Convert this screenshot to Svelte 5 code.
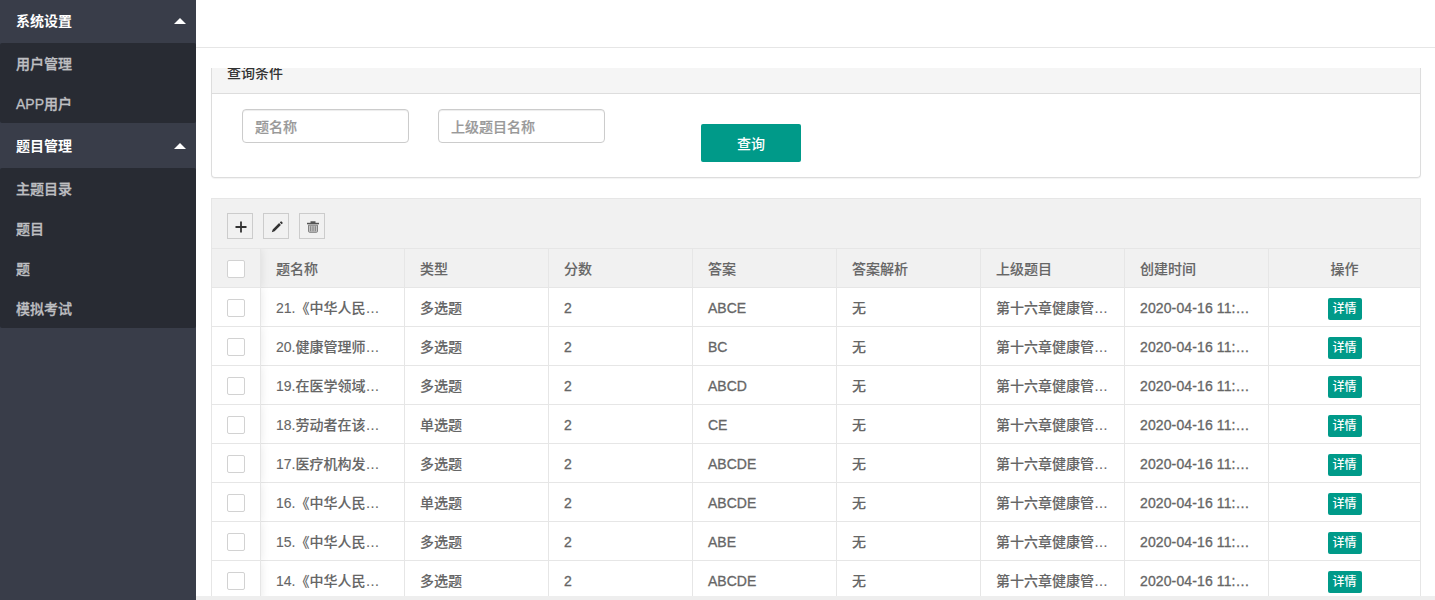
<script>
  const menus = [
    { title: "系统设置", items: ["用户管理", "APP用户"] },
    { title: "题目管理", items: ["主题目录", "题目", "题", "模拟考试"] },
  ];

  const columns = ["题名称", "类型", "分数", "答案", "答案解析", "上级题目", "创建时间"];

  const rows = [
    { name: "21.《中华人民…", type: "多选题", score: 2, answer: "ABCE" },
    { name: "20.健康管理师…", type: "多选题", score: 2, answer: "BC" },
    { name: "19.在医学领域…", type: "多选题", score: 2, answer: "ABCD" },
    { name: "18.劳动者在该…", type: "单选题", score: 2, answer: "CE" },
    { name: "17.医疗机构发…", type: "多选题", score: 2, answer: "ABCDE" },
    { name: "16.《中华人民…", type: "单选题", score: 2, answer: "ABCDE" },
    { name: "15.《中华人民…", type: "多选题", score: 2, answer: "ABE" },
    { name: "14.《中华人民…", type: "多选题", score: 2, answer: "ABCDE" },
  ];
  const analysis = "无";
  const parent = "第十六章健康管…";
  const created = "2020-04-16 11:…";
</script>

<div class="layout">
  <nav class="side">
    {#each menus as menu}
      <div class="menu-title">
        <span>{menu.title}</span>
        <i class="arrow"></i>
      </div>
      <ul class="menu-child">
        {#each menu.items as item}
          <li>{item}</li>
        {/each}
      </ul>
    {/each}
  </nav>

  <div class="main">
    <header class="top"></header>
    <div class="body">
      <div class="panel">
        <div class="panel-heading">查询条件</div>
        <div class="panel-body">
          <input type="text" placeholder="题名称" />
          <input type="text" placeholder="上级题目名称" />
          <button class="search">查询</button>
        </div>
      </div>

      <div class="table-view">
        <div class="tools">
          <button class="tool" aria-label="add">
            <svg width="16" height="16" viewBox="0 0 16 16">
              <path d="M8 2.5v11M2.5 8h11" stroke="#333" stroke-width="1.8" fill="none" />
            </svg>
          </button>
          <button class="tool" aria-label="edit">
            <svg width="16" height="16" viewBox="0 0 16 16">
              <path d="M2.8 13.3l.9-2.9 6.4-6.3 1.8 1.8-6.3 6.4zM10.8 3.5l.9-.9q.5-.4 1 0l.8.8q.4.5 0 1l-.9.9z" fill="#333" />
            </svg>
          </button>
          <button class="tool" aria-label="delete">
            <svg width="16" height="16" viewBox="0 0 16 16">
              <path d="M5.5 2.4h5v1.4h-5z" fill="#333" />
              <path d="M2 3.8h12v1.5H2z" fill="#555" />
              <path d="M3.5 6.2h9v6.1q0 1-1 1h-7q-1 0-1-1z" fill="#c4c4c4" stroke="#777" stroke-width=".9" />
              <path d="M5.7 7.2v5M8 7.2v5M10.3 7.2v5" stroke="#777" stroke-width=".9" />
            </svg>
          </button>
        </div>

        <div class="row head">
          <div class="cell check"><i class="box"></i></div>
          {#each columns as column}
            <div class="cell">{column}</div>
          {/each}
          <div class="cell action">操作</div>
        </div>
        {#each rows as row}
          <div class="row">
            <div class="cell check"><i class="box"></i></div>
            <div class="cell">{row.name}</div>
            <div class="cell">{row.type}</div>
            <div class="cell latin">{row.score}</div>
            <div class="cell latin">{row.answer}</div>
            <div class="cell">{analysis}</div>
            <div class="cell">{parent}</div>
            <div class="cell latin date">{created}</div>
            <div class="cell action"><button class="detail">详情</button></div>
          </div>
        {/each}
      </div>
    </div>
    <footer></footer>
  </div>
</div>

<style>
  :global(body) {
    overflow: hidden;
  }
  .layout {
    display: flex;
    height: 600px;
    overflow: hidden;
    font-family: "Liberation Sans", "Noto Sans CJK SC", sans-serif;
    font-size: 14px;
    font-weight: 500;
    background: #fff;
  }
  .layout * {
    box-sizing: border-box;
  }
  button,
  input {
    font: inherit;
    padding: 0;
    margin: 0;
  }
  .side {
    flex: none;
    width: 196px;
    background: #393d49;
  }
  .menu-title {
    display: flex;
    align-items: center;
    justify-content: space-between;
    height: 45px;
    padding: 0 10px 0 16px;
    color: #fff;
    font-weight: 700;
  }
  .menu-title span {
    padding-bottom: 2px;
  }
  .menu-title:first-child {
    height: 43px;
    padding-bottom: 2px;
  }
  .arrow {
    border: 6px solid transparent;
    border-top: 0;
    border-bottom-color: #fff;
  }
  .menu-child {
    list-style: none;
    margin: 0;
    padding: 0;
    background: #282b33;
    border-radius: 2px;
  }
  .menu-child li {
    height: 40px;
    line-height: 42px;
    padding-left: 16px;
    color: #bebfc2;
    -webkit-text-stroke: 0.3px #bebfc2;
  }
  .main {
    flex: 1;
    min-width: 0;
    display: flex;
    flex-direction: column;
  }
  .top {
    flex: none;
    height: 48px;
    margin-bottom: 20px;
    border-bottom: 1px solid #e6e6e6;
  }
  .body {
    flex: 1;
    min-height: 0;
    padding: 0 14px 0 15px;
    overflow: hidden;
  }
  footer {
    flex: none;
    height: 4px;
    background: #eee;
  }
  .panel {
    height: 110px;
    margin-bottom: 20px;
    border: 1px solid #ddd;
    border-top: 0;
    border-radius: 0 0 4px 4px;
    box-shadow: 0 1px 1px rgba(0, 0, 0, 0.05);
  }
  /* the heading is partly scrolled out of view */
  .panel-heading {
    display: flex;
    align-items: flex-end;
    height: 26px;
    line-height: 20px;
    padding: 0 0 10px 15px;
    border-bottom: 1px solid #ddd;
    background: #f5f5f5;
    color: #333;
    overflow: hidden;
  }
  .panel-body {
    display: flex;
    align-items: flex-start;
    padding: 15px 30px;
  }
  input {
    width: 166.5px;
    height: 34px;
    padding: 2px 12px 0;
    margin-right: 29.5px;
    border: 1px solid #ccc;
    border-radius: 4px;
    box-shadow: inset 0 1px 1px rgba(0, 0, 0, 0.075);
    background: #fff;
  }
  input::placeholder {
    color: #999;
    opacity: 1;
    -webkit-text-stroke: 0.2px #999;
  }
  .search {
    width: 100px;
    height: 38px;
    margin: 15px 0 0 67px;
    border: 0;
    border-radius: 2px;
    background: #009a89;
    color: #fff;
  }
  .table-view {
    border: 1px solid #e6e6e6;
  }
  .tools {
    display: flex;
    gap: 10px;
    height: 50px;
    padding: 14px 15px;
    border-bottom: 1px solid #e6e6e6;
    background: #f1f1f1;
  }
  .tool {
    display: flex;
    align-items: center;
    justify-content: center;
    width: 26px;
    height: 26px;
    padding: 2px 0 0 2px;
    border: 1px solid #ccc;
    background: transparent;
  }
  .row {
    display: grid;
    grid-template-columns: 49px repeat(7, 144px) 1fr;
    height: 39px;
    border-bottom: 1px solid #e6e6e6;
    color: #666;
  }
  .head {
    background: #f1f1f1;
  }
  .cell {
    height: 38px;
    line-height: 40px;
    padding-left: 15px;
    border-right: 1px solid #e6e6e6;
    white-space: nowrap;
    overflow: hidden;
    -webkit-text-stroke: 0.1px #666;
  }
  .latin {
    -webkit-text-stroke: 0.3px #666;
  }
  .date {
    letter-spacing: 0.12px;
  }
  .check {
    height: 39px;
    padding-top: 11px;
    line-height: 0;
    overflow: visible;
    box-shadow: 1px 0 8px rgba(0, 0, 0, 0.08);
    clip-path: inset(0 -10px 0 0);
  }
  .box {
    display: block;
    width: 18px;
    height: 18px;
    border: 1px solid #d2d2d2;
    border-radius: 2px;
    background: #fff;
  }
  .action {
    display: flex;
    justify-content: center;
    padding: 0;
    border-right: 0;
  }
  .detail {
    width: 34px;
    height: 22px;
    margin-top: 10px;
    border: 0;
    border-radius: 2px;
    background: #009a89;
    color: #fff;
    font-size: 12px;
    line-height: 22px;
    -webkit-text-stroke: 0;
  }
</style>
